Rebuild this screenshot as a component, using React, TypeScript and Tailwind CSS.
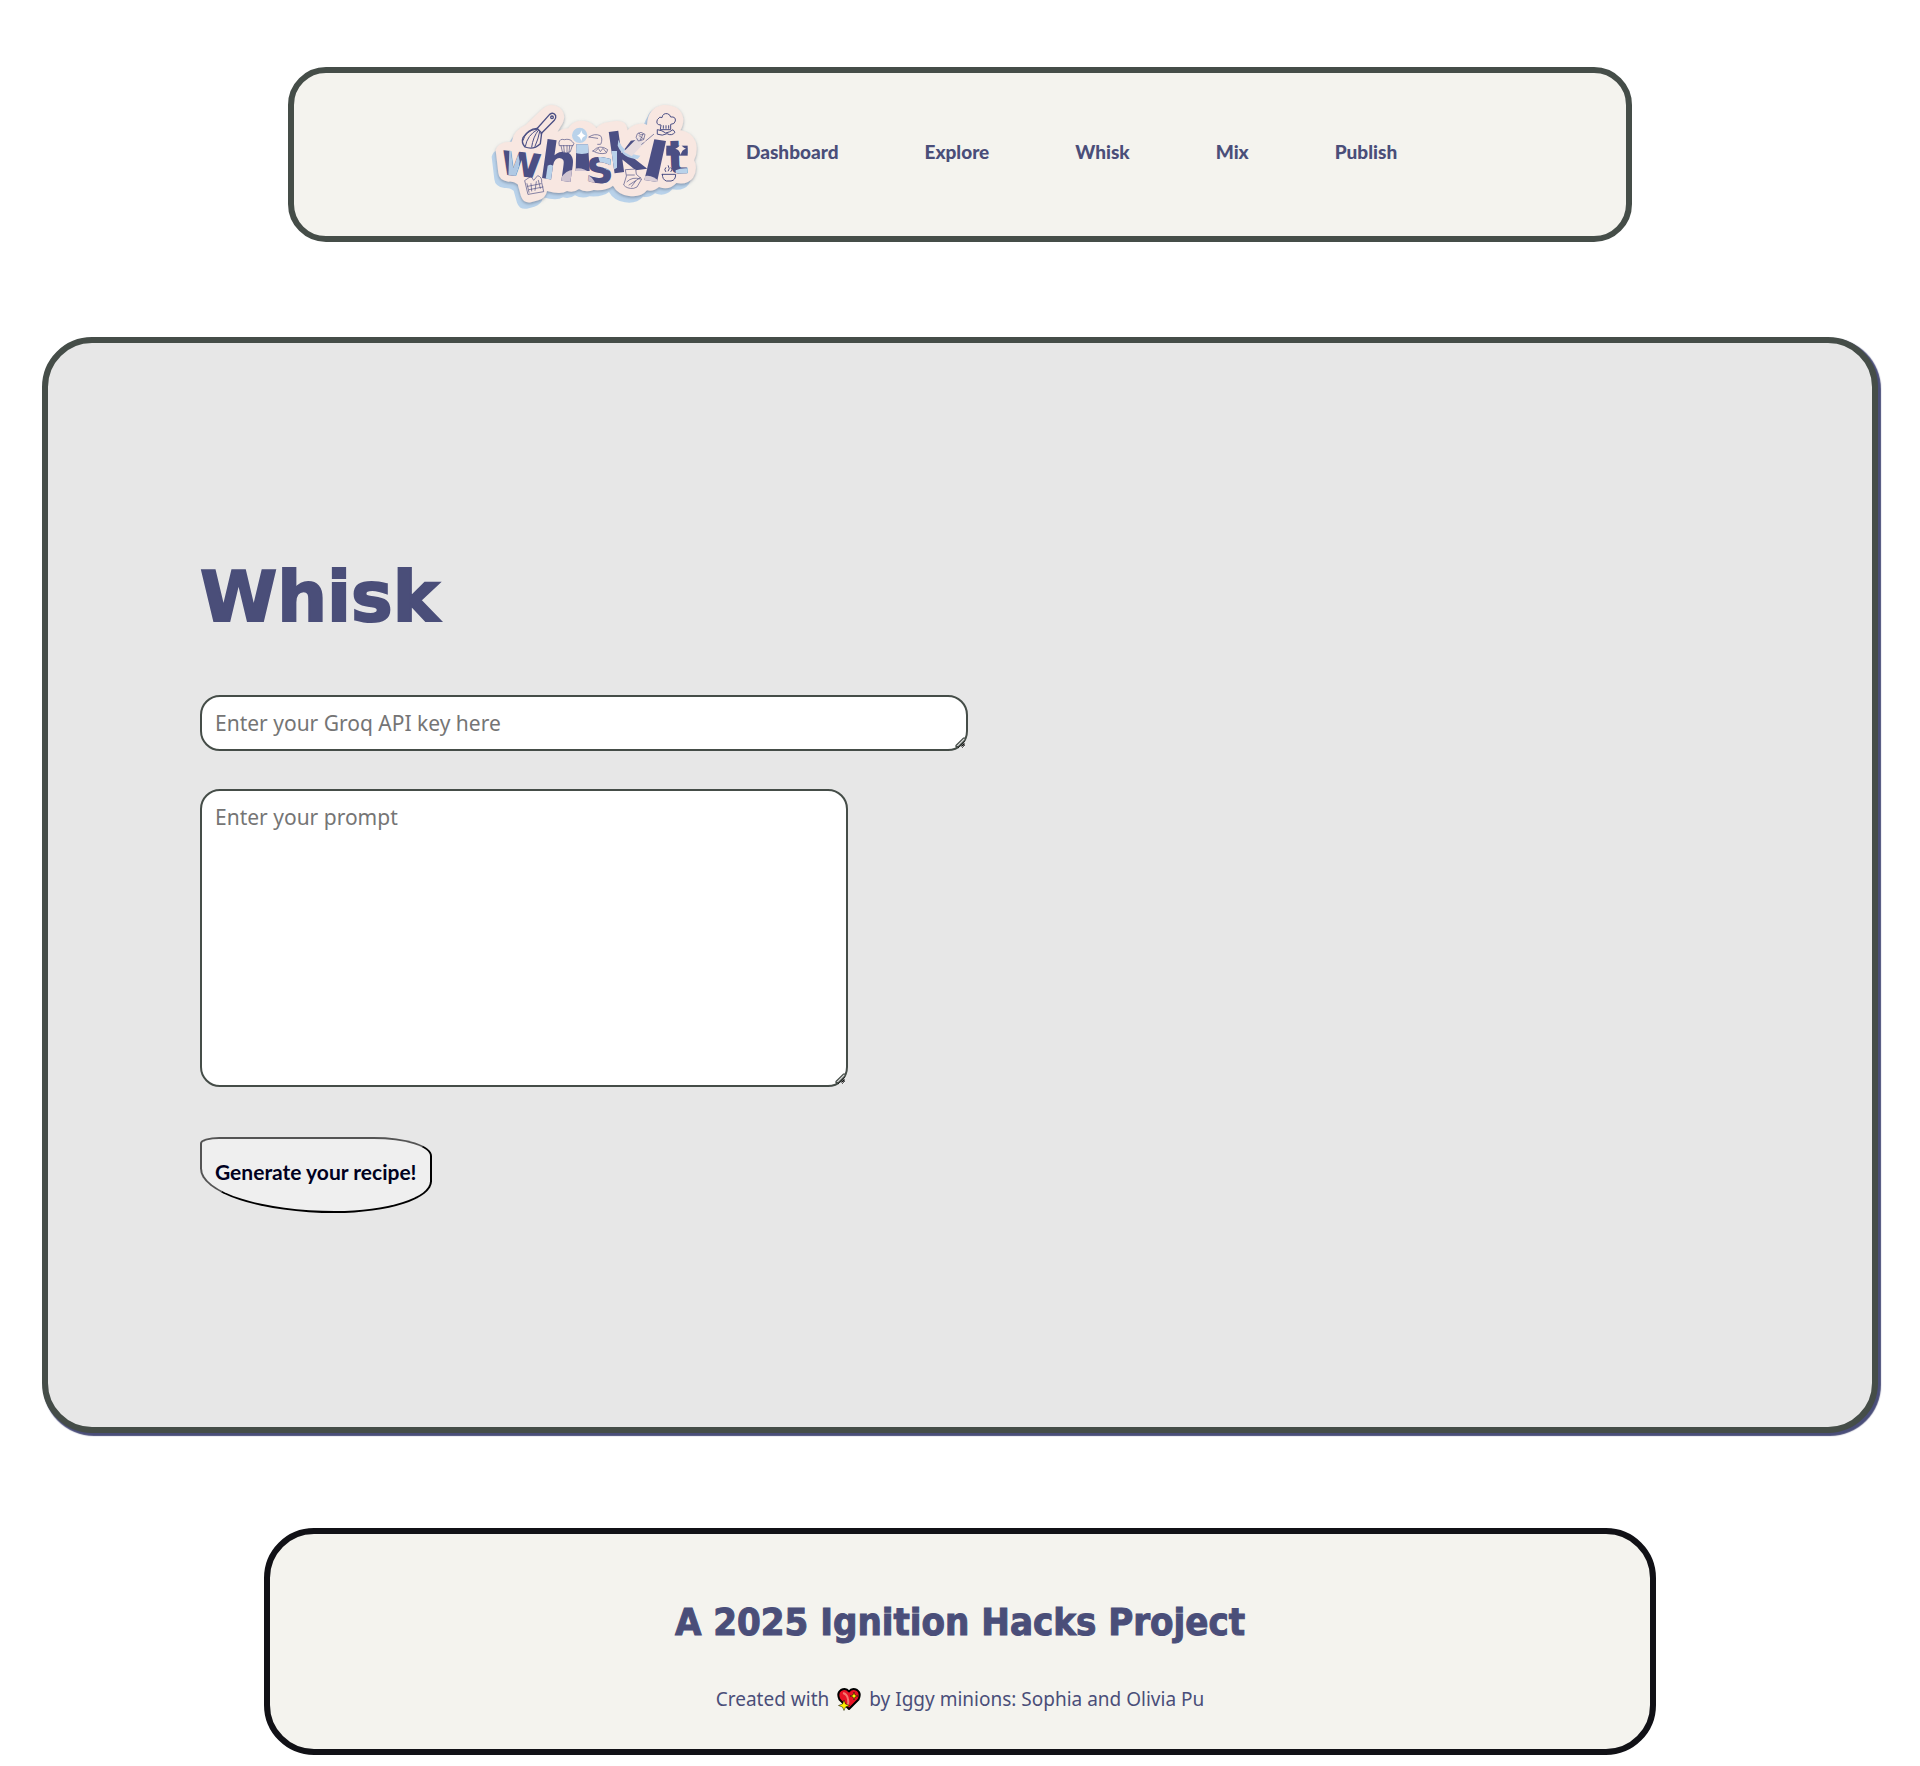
import React from "react";

const links = ["Dashboard", "Explore", "Whisk", "Mix", "Publish"];

const stickerPath =
  "M50 178Q56 152 98 152Q104 118 140 102L186 58Q214 30 242 50Q268 74 244 108L236 122Q252 112 268 112Q284 84 318 90Q340 94 352 112Q366 94 392 93Q432 84 442 104L446 118Q462 98 486 98Q496 96 504 102Q506 50 552 42Q606 40 613 84Q613 104 604 118Q636 122 650 152Q658 182 645 208Q658 232 642 260Q626 282 592 276Q570 300 540 288Q524 302 504 298Q486 320 450 315Q416 310 402 284Q382 300 344 297Q320 306 300 294Q284 306 264 300Q246 312 204 300Q200 322 178 328L156 334Q134 338 126 316L116 280Q104 270 88 272Q60 268 58 246Z";

function Letters() {
  return (
    <>
      <text x="64" y="256" fontSize="134" transform="rotate(6 120 220)">w</text>
      <text x="184" y="268" fontSize="156" transform="rotate(8 240 210)">h</text>
      <polygon points="292,160 327,160 332,240 290,240" />
      <text x="322" y="274" fontSize="138" transform="rotate(4 350 230)">s</text>
      <text x="384" y="242" fontSize="165" transform="rotate(-8 440 180)">k</text>
      <polygon points="526,145 561,150 534,273 496,267" />
      <text x="561" y="248" fontSize="140" transform="rotate(-2 595 190)">t</text>
    </>
  );
}

function Logo() {
  return (
    <svg viewBox="0 0 690 390" className="h-[130px] w-[230px]" role="img" aria-label="Whisk It" fontFamily="DejaVu Sans, sans-serif" fontWeight={700}>
      <defs>
        <clipPath id="letterClip">
          <Letters />
        </clipPath>
        <filter id="stickerShadow" x="-10%" y="-10%" width="120%" height="125%">
          <feDropShadow dx="0" dy="4" stdDeviation="4" floodColor="#5d6a80" floodOpacity="0.6" />
        </filter>
      </defs>
      <path d={stickerPath} transform="translate(-12 19)" fill="#b9d2ea" />
      <path d="M500 110Q502 62 530 52L520 110Z" fill="#b9d2ea" />
      <path d={stickerPath} fill="#f8e7e1" filter="url(#stickerShadow)" />
      <g fill="#4b4f84">
        <Letters />
      </g>
      <g clipPath="url(#letterClip)">
        <path d="M92 150h18l12 60-6 50H88Z" fill="#b0c9e4" />
        <path d="M196 290l10-66q16-10 26 16l-8 50Z" fill="#b9d2ea" />
        <path d="M245 262q20-30 45-24v50h-45Z" fill="#d0c4d1" />
        <path d="M284 150h50v34q-26 10-50 0Z" fill="#b9d2ea" />
        <path d="M284 234q24-8 50 12v10h-50Z" fill="#d0c4d1" />
        <path d="M356 180h58v50q-20 16-38 2-20-20-20-52Z" fill="#b9d2ea" />
        <path d="M310 262q24-22 40 18H310Z" fill="#d0c4d1" />
        <path d="M490 258q26-12 54 16v12h-54Z" fill="#d9cdd6" />
        <path d="M590 238q20-10 50-4v30h-50Z" fill="#b9d2ea" />
      </g>
      <path d="M418 146q16 42 66 48l-8 10q-44-2-60-40Z" fill="#b9d2ea" />
      <path d="M434 182l46-46 14 22-36 38Z" fill="#e6dcdf" />
      <circle cx="302" cy="133" r="23" fill="#b9d2ea" />
      <path d="M307 118q2 13 13 16-11 3-13 16-3-13-13-16 10-3 13-16Z" fill="#fff" />
      <path d="M562 164h64v30h-64Z" fill="#4b4f84" />
      <path d="M605 154q3 16 16 19-13 3-16 19-3-16-16-19 13-3 16-19Z" fill="#f8e7e1" />
      <g fill="none" stroke="#4b4f84" strokeWidth="4" strokeLinecap="round" strokeLinejoin="round">
        <path d="M173 114L212 70Q224 62 230 74Q232 82 226 88L186 128" />
        <circle cx="219" cy="79" r="4" />
        <path d="M174 112l14 14-4 32q-20 20-46 10-12-14-6-28 16-26 42-28Z" />
        <path d="M175 116q-30 16-36 50M178 118q-16 20-20 50M182 122q-4 22-14 44M174 114q-34 4-42 34" strokeWidth="3" />
        <path d="M545 102q-16 0-10-16 8-12 14-6 2-14 16-12 8 2 10 10 16-2 14 12-2 10-14 10v16h-30Z" strokeWidth="3" />
        <path d="M553 112v-8m8 8v-8m8 8v-8M536 116q14 2 24 10 12-2 22-10l6 8q-10 12-24 4-14 8-28 2Z" strokeWidth="3" />
        <path d="M550 250h40q0 18-14 20h-14q-12-4-12-20ZM560 242q-6-6 0-12m8 10q6-6 0-16m8 18q6-6 0-12" strokeWidth="3" />
      </g>
      <g fill="none" stroke="#4b4f84" strokeWidth="2" strokeLinecap="round" strokeLinejoin="round">
        <path d="M240 154q2-12 16-8 16-4 24 6 8 4 2 12h-40ZM246 164l4 18q12 8 24 0l6-18M254 164l2 20m8-20v22m8-22l-2 20" fill="#f8e7e1" />
        <path d="M330 138q16-12 34-4 8 8 2 24m-36-20l26 4M356 160h8M342 180q20-22 44-4l-4 10q-20 6-40-6ZM350 180l8-8 6 10 8-10 8 10" />
        <path d="M476 128l10-4 12 6-4 16-16 4-6-10Zm4 6l14 10m-2-14l-8 16m16 4l24-20m-28 24l-8 6M480 126l4 6 8-2" />
        <path d="M440 236l30-2 2 16 16 14-14 24-10 4q-20 2-30-10l8-26Z" fill="#f8e7e1" />
        <path d="M444 252h22m-22 20q16-16 40-8m-34 18l34-22m-26 26l12-16" />
        <path d="M138 268l18-12 8 12 12-14q14 4 12 20l6 28-46 8Zm12 36l-6-26m14 22l-2-22m12 20l4-26m12 20l-6-24M146 286l40-8m-36 18l42-8" />
      </g>
    </svg>
  );
}

function SparkHeart() {
  return (
    <svg viewBox="0 0 24 24" className="mx-2 inline-block size-6 align-[-5px]" role="img" aria-label="love">
      <path d="M12 22L2.500 12.500Q-.5 6 4 3Q9 .5 12 4.500Q15 .5 20 3Q24.500 6 21.500 12.500Z" fill="#e81224" stroke="#000" strokeWidth="2" strokeLinejoin="round" />
      <path d="M6 6q4 1 5 6 1 4-1 7" fill="none" stroke="#f37a70" strokeWidth="2" />
      <path d="M17 5l1 3 3 1-3 1-1 3-1-3-3-1 3-1ZM7 13l1.500 4 4 1.500-4 1.500L7 23.500 5.500 20l-4-1.500 4-1.500Z" fill="#fff100" stroke="#000" strokeWidth=".5" />
    </svg>
  );
}

function Grip() {
  return (
    <svg viewBox="0 0 12 12" className="pointer-events-none absolute right-px bottom-0.5 size-3" aria-hidden="true">
      <path d="M1 8.500L8.500 1H10v2L3.500 9.500H1Z" fill="#e0e0e0" stroke="#454d48" strokeWidth="1.200" />
      <path d="M5.500 9.500L9.500 5.500V8L7 9.500Z" fill="#111" />
    </svg>
  );
}

export default function App() {
  return (
    <div className="flex min-h-screen flex-col bg-white pt-[67px] pb-[10px] font-['Noto_Sans',sans-serif] text-[#4a4e79]">
      <header className="mx-auto flex w-[70%] items-center rounded-[38px] border-6 border-[#454d48] bg-[#f4f3ee] pt-[18px] pb-[15px] pl-[185px]">
        <Logo />
        <nav className="mb-2 ml-[37px] flex gap-[86px] font-['Lato',sans-serif] text-[19px] leading-6 font-black">
          {links.map((label) => (
            <a key={label} href="#">{label}</a>
          ))}
        </nav>
      </header>

      <main className="mx-[42px] mt-[95px] flex flex-col items-start rounded-[50px] border-6 border-[#454d48] bg-[#e7e7e7] px-[152px] pt-[214px] pb-[214px] shadow-[2px_2px_1px_1px_#4a4e79]">
        <h1 className="font-['DejaVu_Sans',sans-serif] text-[70px] leading-[80px] font-bold [-webkit-text-stroke:2px_#4a4e79]">Whisk</h1>
        <div className="relative mt-[58px] w-[768px] max-w-full">
          <textarea
            aria-label="Groq API key"
            placeholder="Enter your Groq API key here"
            className="block h-14 w-full overflow-hidden rounded-[20px] border-2 border-[#454d48] bg-white px-[13px] py-3 text-[21px] leading-7 placeholder:text-[#757575]"
          />
          <Grip />
        </div>
        <div className="relative mt-[38px] w-[648px] max-w-full">
          <textarea
            aria-label="Prompt"
            placeholder="Enter your prompt"
            className="block h-[298px] w-full rounded-[20px] border-2 border-[#454d48] bg-white px-[13px] py-3 text-[21px] leading-7 placeholder:text-[#757575]"
          />
          <Grip />
        </div>
        <button
          type="button"
          className="mt-[50px] h-[76px] rounded-[10%_30%_50%_70%] border-2 border-black bg-[#efefef] px-[13px] pb-1.5 font-['Lato',sans-serif] text-[21px] font-bold text-[#000020] [border-style:outset]"
        >
          Generate your recipe!
        </button>
      </main>

      <footer className="mx-auto mt-[95px] flex w-[72.5%] flex-col items-center rounded-[50px] border-6 border-[#111116] bg-[#f4f3ee] pt-16 pb-[35px]">
        <h2 className="font-['DejaVu_Sans_Condensed','DejaVu_Sans',sans-serif] text-[38px] leading-[48px] font-bold [-webkit-text-stroke:1px_#4a4e79]">A 2025 Ignition Hacks Project</h2>
        <p className="mt-[38px] text-[19px] leading-[30px]">
          Created with
          <SparkHeart />
          by Iggy minions: Sophia and Olivia Pu
        </p>
      </footer>
    </div>
  );
}
